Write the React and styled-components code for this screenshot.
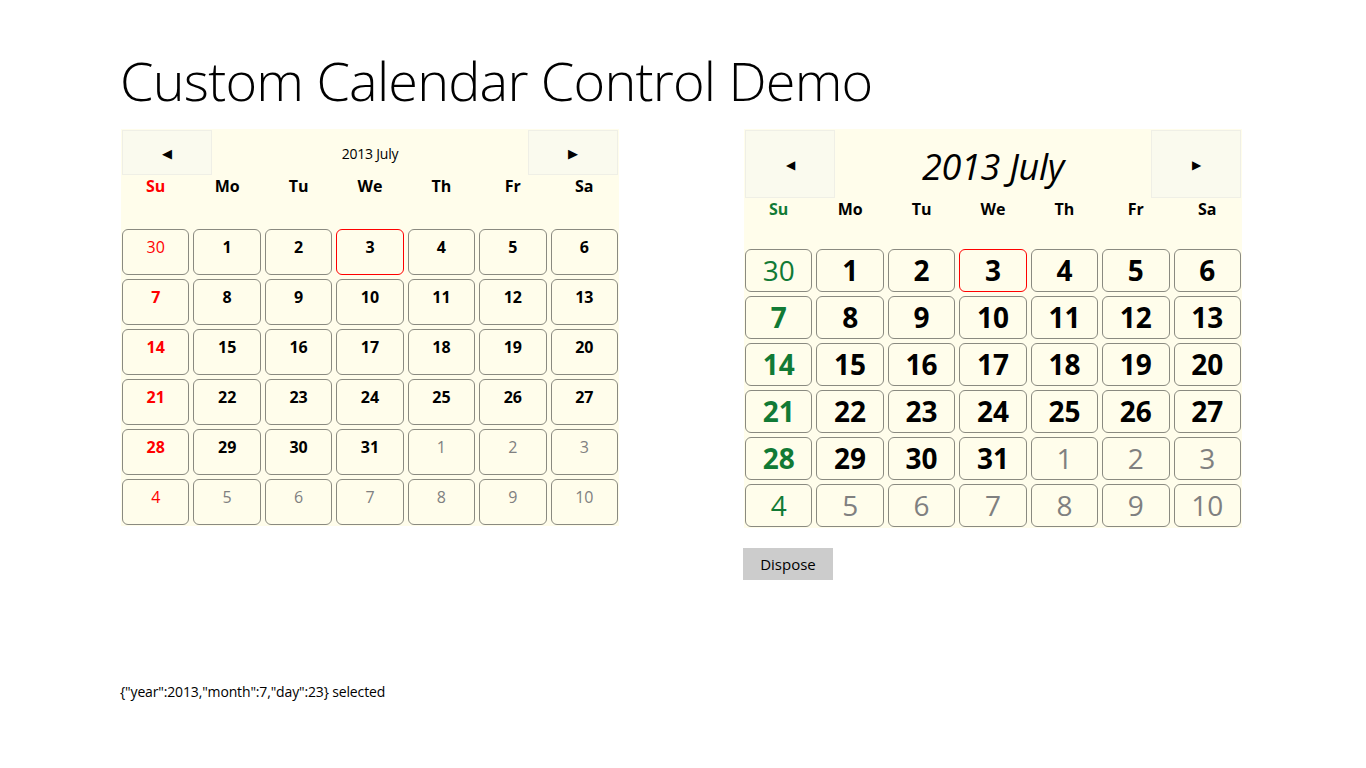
import React from "react";
import styled, { createGlobalStyle, css } from "styled-components";

const GlobalStyle = createGlobalStyle`
  html, body {
    margin: 0;
    padding: 0;
    background: #ffffff;
    font-family: "Open Sans", "Noto Sans", sans-serif;
    color: #000;
  }
`;

const DAY_NAMES = ["Su", "Mo", "Tu", "We", "Th", "Fr", "Sa"];

const buildWeeks = () => {
  const days = [{ n: 30, other: true }];
  for (let d = 1; d <= 31; d++) days.push({ n: d, other: false });
  for (let d = 1; d <= 10; d++) days.push({ n: d, other: true });
  const weeks = [];
  for (let i = 0; i < 6; i++) weeks.push(days.slice(i * 7, i * 7 + 7));
  return weeks;
};

const sizes = {
  small: {
    navHeight: 45,
    titleSize: 14,
    titleStyle: "normal",
    namesHeight: 54,
    rowHeight: 46,
    numSize: 16,
    numPad: 8,
    arrow: 13,
  },
  large: {
    navHeight: 68,
    titleSize: 36,
    titleStyle: "italic",
    namesHeight: 51,
    rowHeight: 43,
    numSize: 28,
    numPad: 0,
    arrow: 12,
  },
};

const Page = styled.div`
  padding: 48px 0 0 120px;
  height: 768px;
  box-sizing: border-box;
`;

const Heading = styled.h1`
  margin: 0 0 17px 0;
  font-family: "Open Sans", sans-serif;
  font-weight: 300;
  font-size: 54px;
  line-height: 64px;
  letter-spacing: -0.8px;
`;

const Columns = styled.div`
  display: flex;
  align-items: flex-start;
  gap: 125px;
`;

const Column = styled.div`
  display: flex;
  flex-direction: column;
`;

const CalendarBox = styled.div`
  width: ${(p) => p.$width}px;
  margin-left: ${(p) => p.$offset}px;
  background: #fffdeb;
  padding: 1px;
  box-sizing: border-box;
`;

const NavBar = styled.div`
  display: flex;
  align-items: center;
  height: ${(p) => p.$s.navHeight}px;
`;

const NavButton = styled.div`
  width: 90px;
  height: 100%;
  box-sizing: border-box;
  background: #fafaee;
  border: 1px solid #efefe6;
  display: flex;
  align-items: center;
  justify-content: center;
  font-size: ${(p) => p.$s.arrow}px;
  color: #000;
`;

const MonthTitle = styled.div`
  flex: 1;
  text-align: center;
  font-size: ${(p) => p.$s.titleSize}px;
  font-style: ${(p) => p.$s.titleStyle};
  ${(p) =>
    p.$s.titleStyle === "italic"
      ? css`
          padding-top: 4px;
          letter-spacing: -0.3px;
        `
      : css`
          padding-top: 1px;
          letter-spacing: -0.2px;
        `}
`;

const NamesRow = styled.div`
  display: grid;
  grid-template-columns: repeat(7, 1fr);
  column-gap: 4px;
  height: ${(p) => p.$s.namesHeight}px;
  align-items: start;
`;

const DayName = styled.div`
  text-align: center;
  font-weight: 700;
  font-size: 16px;
  line-height: 22px;
  color: ${(p) => p.$color || "#000"};
`;

const Grid = styled.div`
  display: grid;
  grid-template-columns: repeat(7, 1fr);
  grid-auto-rows: ${(p) => p.$s.rowHeight}px;
  gap: 4px;
`;

const Cell = styled.div`
  box-sizing: border-box;
  border: 1px solid ${(p) => (p.$today ? "#ff0000" : "#8a8a80")};
  border-radius: 6px;
  background: #fffdeb;
  display: flex;
  justify-content: center;
  align-items: ${(p) => (p.$s.numPad ? "flex-start" : "center")};
  padding-top: ${(p) => p.$s.numPad}px;
  font-size: ${(p) => p.$s.numSize}px;
  line-height: 1.2;
  font-weight: ${(p) => (p.$other ? 400 : 700)};
  color: ${(p) => p.$color};
`;

const DisposeButton = styled.button`
  margin-top: 20px;
  margin-left: -1px;
  width: 90px;
  height: 32px;
  border: none;
  background: #cccccc;
  font-family: "Open Sans", sans-serif;
  font-size: 15px;
  color: #000;
  padding: 0;
`;

const Status = styled.div`
  margin-top: 102px;
  font-size: 14px;
  letter-spacing: -0.15px;
`;

function Calendar({ size, weekend, width, offset }) {
  const s = sizes[size];
  const weeks = buildWeeks();
  const colorFor = (day, col) => {
    if (col === 0) return weekend;
    return day.other ? "#808080" : "#000";
  };
  return (
    <CalendarBox $width={width} $offset={offset}>
      <NavBar $s={s}>
        <NavButton $s={s}>◀</NavButton>
        <MonthTitle $s={s}>2013 July</MonthTitle>
        <NavButton $s={s}>▶</NavButton>
      </NavBar>
      <NamesRow $s={s}>
        {DAY_NAMES.map((n, i) => (
          <DayName key={n} $color={i === 0 ? weekend : null}>
            {n}
          </DayName>
        ))}
      </NamesRow>
      <Grid $s={s}>
        {weeks.map((week, w) =>
          week.map((day, c) => (
            <Cell
              key={`${w}-${c}`}
              $s={s}
              $other={day.other}
              $today={!day.other && day.n === 3}
              $color={colorFor(day, c)}
            >
              {day.n}
            </Cell>
          ))
        )}
      </Grid>
    </CalendarBox>
  );
}

export default function App() {
  return (
    <Page>
      <GlobalStyle />
      <Heading>Custom Calendar Control Demo</Heading>
      <Columns>
        <Column>
          <Calendar size="small" weekend="#ff0000" width={498} offset={1} />
        </Column>
        <Column>
          <Calendar size="large" weekend="#117a35" width={498} offset={0} />
          <DisposeButton>Dispose</DisposeButton>
        </Column>
      </Columns>
      <Status>{'{"year":2013,"month":7,"day":23} selected'}</Status>
    </Page>
  );
}
